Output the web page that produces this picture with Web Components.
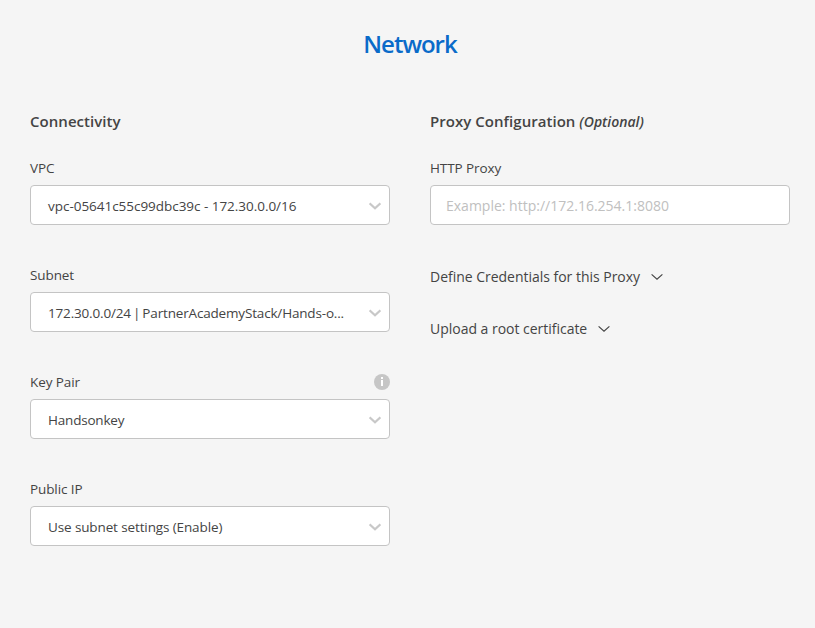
<!DOCTYPE html>
<html lang="en"><head><meta charset="utf-8"><title>Network</title>
<style>body{margin:0;background:#f5f5f5;font-family:"Open Sans","Noto Sans",sans-serif;color:#444}</style></head>
<body>
<network-page></network-page>
<script>
const define=(name,html)=>customElements.define(name,class extends HTMLElement{
  constructor(){super();const t=document.createElement('template');t.innerHTML=html;this.attachShadow({mode:'open'}).append(t.content.cloneNode(true));}
});
define('chevron-icon',`<style>:host{display:block;width:12px;height:8px;flex:none}svg{display:block}path{stroke-width:var(--w,1.2)}</style>
<svg width="12" height="8" viewBox="0 0 12 8" fill="none" stroke="currentColor"><path d="M.6 1.4 6 6.2 11.4 1.4"/></svg>`);
define('info-icon',`<style>:host{display:block;width:16px;height:16px}svg{display:block}</style>
<svg width="16" height="16" viewBox="0 0 16 16"><circle cx="8" cy="8" r="8" fill="#c6c6c6"/><path d="M7 3h2v2H7zM7 6h2v6H7z" fill="#fff"/></svg>`);
define('select-box',`<style>:host{display:flex;box-sizing:border-box;height:40px;align-items:center;justify-content:space-between;border:1px solid #c4c4c4;border-radius:4px;background:#fff;padding:2px 8px 0 17px;font-size:13.5px;white-space:nowrap}
chevron-icon{color:#c8c8c8;--w:2.2;margin-top:-1px}</style><span><slot></slot></span><chevron-icon></chevron-icon>`);
define('text-box',`<style>:host{display:flex;box-sizing:border-box;height:40px;align-items:center;border:1px solid #c4c4c4;border-radius:4px;background:#fff;padding:0 15px;font-size:14px;color:#c0c0c0}</style><span><slot></slot></span>`);
define('form-field',`<style>:host{display:block;height:107px}.l{display:flex;justify-content:space-between;align-items:center;height:20px;margin-bottom:7px;font-size:13.5px;letter-spacing:-.1px}</style>
<div class="l"><span><slot name="label"></slot></span><slot name="hint"></slot></div><slot></slot>`);
define('section-title',`<style>:host{display:block;font-size:15px;font-weight:600;line-height:22px;height:48px;white-space:nowrap;letter-spacing:.04px}::slotted(em){font-size:14px;letter-spacing:0}</style><slot></slot>`);
define('expand-link',`<style>:host{display:flex;align-items:center;gap:11px;height:52px;font-size:14px;letter-spacing:-.02px}chevron-icon{margin-top:2px}</style><span><slot></slot></span><chevron-icon></chevron-icon>`);
define('network-page',`<style>:host{display:block;box-sizing:border-box;width:815px;height:628px;padding:27px 25px 0 30px}
h1{margin:0;font-size:24px;line-height:34px;font-weight:600;letter-spacing:-1px;color:#0a6bc9;text-align:center}
main{display:grid;grid-template-columns:360px 360px;gap:40px;margin-top:49px}</style>
<h1>Network</h1><main>
<section><section-title>Connectivity</section-title>
<form-field><span slot="label">VPC</span><select-box style="letter-spacing:-.03px">vpc-05641c55c99dbc39c - 172.30.0.0/16</select-box></form-field>
<form-field><span slot="label">Subnet</span><select-box style="letter-spacing:-.17px;word-spacing:-1.2px">172.30.0.0/24 | PartnerAcademyStack/Hands-o...</select-box></form-field>
<form-field><span slot="label">Key Pair</span><info-icon slot="hint"></info-icon><select-box style="letter-spacing:-.2px">Handsonkey</select-box></form-field>
<form-field><span slot="label">Public IP</span><select-box style="letter-spacing:-.12px">Use subnet settings (Enable)</select-box></form-field></section>
<section><section-title>Proxy Configuration <em>(Optional)</em></section-title>
<form-field style="height:92px"><span slot="label">HTTP Proxy</span><text-box>Example: http://172.16.254.1:8080</text-box></form-field>
<expand-link>Define Credentials for this Proxy</expand-link><expand-link>Upload a root certificate</expand-link></section></main>`);
</script></body></html>
